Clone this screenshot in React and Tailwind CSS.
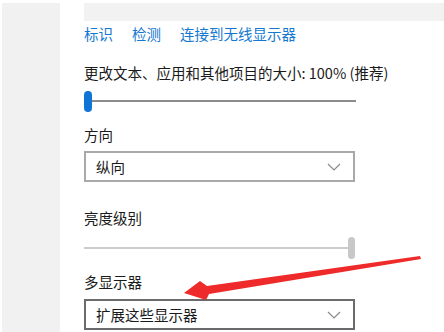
const font = { fontFamily: '"Microsoft YaHei", "Noto Sans CJK SC", "Noto Sans", sans-serif' };

function Chevron() {
  return (
    <svg width="14" height="8" viewBox="0 0 14 8" className="text-[#8a8a8a]">
      <path d="M1 1 L7 7 L13 1" fill="none" stroke="currentColor" strokeWidth="1.2" />
    </svg>
  );
}

function Select({ value, dark }) {
  return (
    <div
      className={`flex items-center justify-between w-[271px] h-[31px] pl-[10px] pr-[12px] border-2 bg-white text-[14.5px] text-[#1a1a1a] ${dark ? 'border-[#6b6b6b]' : 'border-[#a9a9a9]'}`}
    >
      <span>{value}</span>
      <Chevron />
    </div>
  );
}

export default function App() {
  return (
    <div className="w-[444px] h-[332px] bg-white overflow-hidden relative" style={font}>
      <div className="flex h-full pt-[3px]">
        <div className="ml-[2px] w-[58px] bg-[#f1f1f1]" />
        <div className="flex-1 pl-[24px] flex flex-col">
          <div className="h-[18px] bg-[#f2f2f2]" />

          <div className="flex gap-[19px] mt-[3px] text-[14.5px] text-[#1478d2] leading-[20px]">
            <span>标识</span>
            <span>检测</span>
            <span>连接到无线显示器</span>
          </div>

          <p className="mt-[19px] text-[14.5px] leading-[20px] text-[#1a1a1a]">
            更改文本、应用和其他项目的大小: 100% (推荐)
          </p>
          <div className="mt-[7px] flex items-center h-[22px]">
            <div className="w-[8px] h-[21px] rounded-full bg-[#0f74d6]" />
            <div className="w-[264px] h-[2px] bg-[#8c8c8c]" />
          </div>

          <p className="mt-[13px] text-[14.5px] leading-[20px] text-[#1a1a1a]">方向</p>
          <div className="mt-[6px]">
            <Select value="纵向" />
          </div>

          <p className="mt-[26px] text-[14.5px] leading-[20px] text-[#1a1a1a]">亮度级别</p>
          <div className="mt-[9px] flex items-center h-[22px]">
            <div className="w-[264px] h-[2px] bg-[#cccccc]" />
            <div className="w-[7px] h-[22px] rounded-full bg-[#c8c8c8]" />
          </div>

          <p className="mt-[13px] text-[14.5px] leading-[20px] text-[#1a1a1a]">多显示器</p>
          <div className="mt-[7px]">
            <Select value="扩展这些显示器" dark />
          </div>
        </div>
      </div>

      <svg className="absolute left-0 top-0 pointer-events-none" width="444" height="332">
        <polygon
          points="420,256 421,259 209,294 206,300 184,293 200,281 207,286"
          fill="#ee2a2a"
        />
      </svg>
    </div>
  );
}
